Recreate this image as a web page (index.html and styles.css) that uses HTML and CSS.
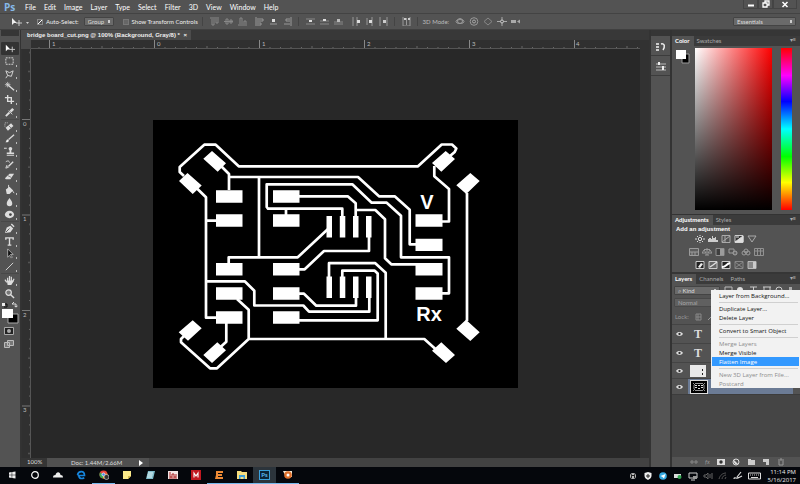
FILE: index.html
```html
<!DOCTYPE html>
<html lang="en">
<head>
  <meta charset="UTF-8">
  <title>bridge board_cut.png</title>
  <link rel="stylesheet" href="styles.css">
</head>
<body>
  <header class="menubar">
    <span class="logo">Ps</span>
    <nav class="menus">
      <a href="#">File</a><a href="#">Edit</a><a href="#">Image</a><a href="#">Layer</a><a href="#">Type</a><a href="#">Select</a><a href="#">Filter</a><a href="#">3D</a><a href="#">View</a><a href="#">Window</a><a href="#">Help</a>
    </nav>
    <div class="window-buttons">
      <button aria-label="Minimize"><svg width="8" height="8"><path d="M1 5.5h6" stroke="#fff" stroke-width="2"/></svg></button>
      <button aria-label="Restore"><svg width="8" height="8"><path d="M3 3V1h4v4H5M1 3h4v4H1z" fill="none" stroke="#fff" stroke-width="1.3"/></svg></button>
      <button class="close" aria-label="Close"><svg width="8" height="8"><path d="M1.500 2l5 5M6.500 2l-5 5" stroke="#fff" stroke-width="1.5"/></svg></button>
    </div>
  </header>

  <div class="options">
    <svg class="opt-move" width="20" height="12"><path d="M2 2v7l2-2h3z" fill="#eee"/><path d="M9 4v6M6 7h6" stroke="#ccc"/><path d="M16 6h3l-1.500 2z" fill="#ccc"/></svg>
    <label class="check"><input type="checkbox" checked>Auto-Select:</label>
    <select class="drop group-select" aria-label="Auto-select target"><option>Group</option></select>
    <label class="check transform"><input type="checkbox">Show Transform Controls</label>
    <div class="opt-group">
      <svg width="9" height="9"><path d="M0 1h9M2 2v6h2V2M6 2v4h2V2" fill="none" stroke="#888"/></svg>
      <svg width="9" height="9"><path d="M0 4.500h9M2 2v5h2V2zM6 3v3h2V3z" fill="none" stroke="#888"/></svg>
      <svg width="9" height="9"><path d="M0 8h9M2 7V1h2v6M6 7V4h2v3" fill="none" stroke="#888"/></svg>
    </div>
    <div class="opt-group">
      <svg width="9" height="9"><path d="M1 0v9M2 2h6v2H2M2 6h4v2H2" fill="none" stroke="#999"/></svg>
      <svg width="9" height="9"><path d="M1 7h7" stroke="#999"/><path d="M3 2h3v3H3z" fill="#ddd"/></svg>
      <svg width="9" height="9"><path d="M8 0v9M7 2H3v2h4M7 7H1" fill="none" stroke="#999"/></svg>
    </div>
    <div class="opt-group ruled">
      <svg width="9" height="9"><path d="M0 2h9M0 7h9" stroke="#888"/><path d="M3 3h3v2H3z" fill="#ddd"/></svg>
      <svg width="9" height="9"><path d="M0 4h9M0 7h9" stroke="#888"/><path d="M3 2h3v2H3z" fill="#ddd"/></svg>
      <svg width="9" height="9"><path d="M0 5h9M0 7h9" stroke="#888"/><path d="M3 2h3v3H3z" fill="#bbb"/></svg>
    </div>
    <div class="opt-group">
      <svg width="9" height="9"><path d="M2 0v9M6 0v9" stroke="#999"/><path d="M6 3h3v3H6z" fill="#ddd"/></svg>
      <svg width="9" height="9"><path d="M2 1v7M7 0v9" stroke="#999"/><path d="M4 3h3v3H4z" fill="#ddd"/></svg>
      <svg width="9" height="9"><path d="M1 0v9M8 0v9" stroke="#999"/><path d="M4 3h3v3H4z" fill="#ccc"/></svg>
    </div>
    <div class="opt-group ruled single">
      <svg width="9" height="9"><path d="M1 0v9h7V0M4.500 1v7" fill="none" stroke="#999"/><path d="M2 1h2v2H2zM6 1h2v2H6z" fill="#ccc"/></svg>
    </div>
    <div class="opt-group ruled mode">
      <span>3D Mode:</span>
      <svg width="10" height="9"><ellipse cx="5" cy="4.500" rx="4" ry="2" fill="none" stroke="#999"/><circle cx="5" cy="4" r="2.500" fill="none" stroke="#999"/></svg>
      <svg width="10" height="9"><circle cx="5" cy="4.500" r="3.800" fill="none" stroke="#999"/><circle cx="5" cy="4.500" r="1.500" fill="none" stroke="#aaa"/></svg>
      <svg width="10" height="9"><path d="M5 1l4 3.500L5 8 1 4.500z" fill="none" stroke="#888"/></svg>
      <svg width="10" height="9"><path d="M5 0v9M0 4.500h10" stroke="#aaa"/><circle cx="5" cy="4.500" r="1.500" fill="#555" stroke="#ccc"/></svg>
      <svg width="10" height="9"><path d="M0 3h5v3H0zM6 4.500l3-2v4z" fill="#aaa"/></svg>
    </div>
    <select class="drop workspace-select" aria-label="Workspace"><option>Essentials</option></select>
  </div>

  <main class="workspace">
    <aside class="toolbar">
      <div class="dock-head"></div>
      <div class="tools tools-a">
        <button class="active" aria-label="Move"><svg viewBox="0 0 12 12"><path d="M2 2v7l2-2h3z" fill="#fff"/><path d="M9 4v6M6 7h6" stroke="#ccc"/></svg></button>
        <button aria-label="Marquee"><svg viewBox="0 0 12 12"><path d="M2 2h8v7H2z" fill="none" stroke="#ddd" stroke-dasharray="2 1"/></svg></button>
        <button aria-label="Lasso"><svg viewBox="0 0 12 12"><path d="M2 2l4 2 4-2-2 6-4-1zM4 7l-2 3" fill="none" stroke="#ddd"/></svg></button>
        <button aria-label="Magic wand"><svg viewBox="0 0 12 12"><path d="M5 5l6 5" stroke="#ddd" stroke-width="1.500"/><path d="M4 1v6M1 4h6M2 2l4 4M6 2L2 6" stroke="#ddd" stroke-width=".8"/></svg></button>
        <button aria-label="Crop"><svg viewBox="0 0 12 12"><path d="M4 1v7h7M1 4h7v7" fill="none" stroke="#ddd" stroke-width="1.500"/></svg></button>
        <button aria-label="Eyedropper"><svg viewBox="0 0 12 12"><path d="M2 10l4-4" stroke="#ddd" stroke-width="2"/><path d="M6 4l3-3 2 2-3 3z" fill="#ddd"/><path d="M5 4l4 4" stroke="#ddd"/></svg></button>
      </div>
      <div class="tools tools-b">
        <button aria-label="Healing brush"><svg viewBox="0 0 12 12"><path d="M3 9l6-5" stroke="#ddd" stroke-width="4"/><path d="M1 6V2h4" fill="none" stroke="#ccc" stroke-dasharray="1 1"/><path d="M5 5l3 3" stroke="#777"/></svg></button>
        <button aria-label="Brush"><svg viewBox="0 0 12 12"><path d="M11 2L5 7" stroke="#ddd" stroke-width="1.500"/><path d="M1 10c2 0 1-3 3-3s2 4-3 3z" fill="#eee"/></svg></button>
        <button aria-label="Clone stamp"><svg viewBox="0 0 12 12"><circle cx="7" cy="3" r="2" fill="#ddd"/><path d="M6 4h2v3h3v2H3V7h3zM3 10h8v1H3zM0 2h3v1H0z" fill="#ddd"/></svg></button>
        <button aria-label="History brush"><svg viewBox="0 0 12 12"><path d="M10 3L5 8" stroke="#ddd" stroke-width="1.500"/><path d="M2 10l1-3 2 2zM2 3c3-2 4 0 4 1" fill="none" stroke="#ddd"/></svg></button>
        <button aria-label="Eraser"><svg viewBox="0 0 12 12"><path d="M1 8l5-5h5L7 9H2z" fill="#ddd"/><path d="M4 5l4 2" stroke="#777"/></svg></button>
        <button aria-label="Paint bucket"><svg viewBox="0 0 12 12"><path d="M2 6l4-3 4 4-4 4H3z" fill="#ddd"/><path d="M5 5V1M9 7l2 3" stroke="#ddd"/></svg></button>
        <button aria-label="Blur"><svg viewBox="0 0 12 12"><path d="M6 1c2 3 3 4 3 6a3 3 0 0 1-6 0c0-2 1-3 3-6z" fill="#ddd"/></svg></button>
        <button aria-label="Dodge"><svg viewBox="0 0 12 12"><ellipse cx="6" cy="6" rx="5" ry="4" fill="#ddd"/><circle cx="7" cy="6" r="1.500" fill="#444"/></svg></button>
      </div>
      <div class="tools tools-c">
        <button aria-label="Pen"><svg viewBox="0 0 12 12"><path d="M1 11l2-6 4-2 3 3-3 4z" fill="#ddd"/><path d="M8 1l3 3" stroke="#ddd" stroke-width="1.500"/><path d="M2 10l4-4" stroke="#555"/></svg></button>
        <button aria-label="Type"><svg viewBox="0 0 12 12"><path d="M2 4V2h8v2M6 2v8M4 10h4" fill="none" stroke="#ddd" stroke-width="1.500"/></svg></button>
        <button aria-label="Path selection"><svg viewBox="0 0 12 12"><path d="M4 1v9l2-2 2 3 1-1-2-3h3z" fill="#111" stroke="#ddd" stroke-width=".7"/></svg></button>
        <button aria-label="Line"><svg viewBox="0 0 12 12"><path d="M2 10l8-8" stroke="#ddd"/></svg></button>
      </div>
      <div class="tools tools-d">
        <button aria-label="Hand"><svg viewBox="0 0 12 12"><path d="M3 6l1 5h4l3-5" fill="#ddd"/><path d="M4 7V3M6 7V1M8 7V2M3 8L1 5M9 8l2-4" stroke="#ddd" stroke-width="1.300"/></svg></button>
        <button class="plain" aria-label="Zoom"><svg viewBox="0 0 12 12"><circle cx="5" cy="5" r="3" fill="#777" stroke="#ddd" stroke-width="1.300"/><path d="M7 7l4 4" stroke="#ddd" stroke-width="1.500"/></svg></button>
      </div>
      <svg class="swatches" width="18" height="24"><path d="M0 3h3v3H0z" fill="#eee"/><path d="M3 4h2v3H2" fill="none" stroke="#111"/><path d="M10 4h4v3M10 4l2-2M14 7l-1.500-1M14 7l1.500-1" fill="none" stroke="#ddd"/><path d="M6 14h10v9H6z" fill="#000" stroke="#aaa"/><path d="M0 9h11v9H0z" fill="#fff"/></svg>
      <button class="tool-wide" aria-label="Quick mask"><svg width="10" height="8"><path d="M.500.500h9v7h-9z" fill="#222" stroke="#aaa"/><circle cx="5" cy="4" r="2" fill="#aaa"/></svg></button>
      <button class="tool-wide" aria-label="Screen mode"><svg width="10" height="8"><path d="M3.500.500h6v5h-6zM.500 2.500h5v5h-5z" fill="#777" stroke="#bbb"/></svg></button>
    </aside>

    <section class="document">
      <div class="doc-tabs"><button class="doc-tab">bridge board_cut.png @ 100% (Background, Gray/8) *<span>×</span></button></div>
      <div class="doc-body">
        <div class="corner"></div>
        <svg class="ruler-h" height="9" width="100%">
          <defs>
            <pattern id="th" x="18" y="0" width="105" height="9" patternUnits="userSpaceOnUse">
              <path d="M.5 0v9" stroke="#888"/>
              <path d="M11 7v2M21.500 7v2M32 7v2M42.500 7v2M53 6v3M63.500 7v2M74 7v2M84.500 7v2M95 7v2" stroke="#686868"/>
            </pattern>
          </defs>
          <rect width="100%" height="9" fill="url(#th)"/>
          <path d="M0 8.500h610" stroke="#555"/>
          <g class="ruler-text"><text x="21" y="6">1</text><text x="126" y="6">0</text><text x="231" y="6">1</text><text x="336" y="6">2</text><text x="441" y="6">3</text><text x="545" y="6">4</text></g>
        </svg>
        <svg class="ruler-v" width="9" height="100%">
          <defs>
            <pattern id="tv" x="0" y="70" width="9" height="95.500" patternUnits="userSpaceOnUse">
              <path d="M0 .5h9" stroke="#777"/>
              <path d="M7 10h2M7 19.500h2M7 29h2M7 38.500h2M6 48h3M7 57.500h2M7 67h2M7 76.500h2M7 86h2" stroke="#686868"/>
            </pattern>
          </defs>
          <rect width="9" height="100%" fill="url(#tv)"/>
          <path d="M8.500 0v410" stroke="#555"/>
          <g class="ruler-text"><text x="1" y="77">0</text><text x="1" y="172">1</text><text x="1" y="268">2</text><text x="1" y="363">3</text></g>
        </svg>
        <div class="canvas">
          <svg class="board" width="365" height="268" viewBox="153 120 365 268">
            <rect x="153" y="120" width="365" height="268" fill="#000"/>
            <!-- traces -->
            <g fill="none" stroke="#fff" stroke-width="2.700" stroke-linejoin="round">
              <path d="M184 176L179.700 172V167L204.300 144.700H215.700L238.700 166.300H418L441.700 144.500H452L456.300 148.500L454.700 152L450 156"/>
              <path d="M221 166L229 174V190M229 177H358L379 196.300H394.700L409.700 209.700V244.300H416M259 177V257"/>
              <path d="M197 188.500L206 197.300V317.700H216M206 220.700H216"/>
              <path d="M286 215V208.700M342.300 217V208.700H268L266.700 207V184.300H352.300L371.700 202.700H386.700L401 215.700V257.300H449V293.300H442"/>
              <path d="M299 196.300H347.700L355.700 203.300V217M355.700 210H375.300L385 219.300V258.300L391.300 264.300H416"/>
              <path d="M442 221.500H449V189L434.300 176.300V166M467 193V321"/>
              <path d="M328 229L297.700 257.300H228.700V264M369 237V251H324L304.700 269.300H299"/>
              <path d="M206 281.300H244.700L254.300 290.700V305.500H303.300L309 311.700H369.300V297"/>
              <path d="M299 293.700H304L316.300 305.700H356V297M299 320.300H377.700V273.500L374.700 270.700H342.300V277"/>
              <path d="M329 277V263.200H375.300L385.700 272.700V339"/>
              <path d="M237 299L248.700 309.700V339L217 368.300H210L181 342.300V339L184 336M248.700 339H424.300L436 349.500M226.300 323V341.700L220 347.500"/>
            </g>
            <!-- pads -->
            <g fill="#fff">
              <path d="M216 190.300h26.500v12.400H216zM216 214.300h26.500v12.400H216zM216 263h26.500v12.400H216zM216 287.300h26.500v12.400H216zM216 311.300h26.500v12.400H216z"/>
              <path d="M273 190.300h26.500v12.400H273zM273 214.300h26.500v12.400H273zM273 263h26.500v12.400H273zM273 287.300h26.500v12.400H273zM273 311.300h26.500v12.400H273z"/>
              <path d="M415.500 214.300h27v12.400h-27zM415.500 238.700h27v12.400h-27zM415.500 263h27v12.400h-27zM415.500 287.300h27v12.400h-27z"/>
              <path d="M326.500 216h5.500v21.500h-5.500zM339.800 216h5.500v21.500h-5.500zM353 216h5.500v21.500H353zM366 216h5.500v21.500H366z"/>
              <path d="M326.500 276.500h5.500V298h-5.500zM339.800 276.500h5.500V298h-5.500zM353 276.500h5.500V298H353zM366 276.500h5.500V298H366z"/>
              <path d="M212 151L226 163.300L217.700 171.700L203.300 158.700zM187.500 173L201.700 185.500L192.700 194L179 181z"/>
              <path d="M445.700 151L455 159L441.300 171.700L432 163zM470.300 173L479.700 181L466.300 194L456.300 185.300z"/>
              <path d="M192.700 320.300L201.700 328.300L188 340.700L178.700 332.300zM217.300 342.300L226 350.300L212 363L203.300 355z"/>
              <path d="M466 319.700L479.700 332.300L470.300 341L456.300 328.700zM441.300 342.300L455 355L446 363L432 350.700z"/>
            </g>
            <g class="board-text"><text x="427" y="209">V</text><text x="429" y="321">Rx</text></g>
          </svg>
        </div>
      </div>
      <footer class="status">
        <span class="zoom-level">100%</span>
        <span class="doc-size">Doc: 1.44M/2.66M<svg width="4" height="6"><path d="M0 0l4 3-4 3z" fill="#fff"/></svg></span>
      </footer>
    </section>

    <aside class="icon-dock">
      <div class="dock-head"></div>
      <button aria-label="History"><svg width="10" height="10"><path d="M0 1h3v2H0zM0 4h3v2H0zM0 7h3v2H0z" fill="#ccc"/><path d="M5 2c4-1 4 3 2 6" fill="none" stroke="#eee" stroke-width="1.500"/></svg></button>
      <button aria-label="Properties"><svg width="10" height="10"><path d="M0 2h10M0 5h10M0 8h10" stroke="#bbb"/><path d="M2 0h2v3H2zM6 4h2v4H6z" fill="#eee"/></svg></button>
    </aside>

    <aside class="panels">
      <div class="dock-head"></div>
      <section class="panel">
        <div class="tabs"><button class="on">Color</button><button>Swatches</button><i class="panel-menu">▾≡</i></div>
        <div class="color-body">
          <svg width="16" height="16"><path d="M7 6h7v9H7z" fill="#000" stroke="#999"/><path d="M1 2h10v9H1z" fill="#fff"/></svg>
          <div class="field"></div>
          <div class="hue"></div>
        </div>
      </section>

      <section class="panel">
        <div class="tabs"><button class="on">Adjustments</button><button>Styles</button><i class="panel-menu">▾≡</i></div>
        <div class="adjust-body">
          <h2>Add an adjustment</h2>
          <div class="adjust-row">
            <svg viewBox="0 0 10 8"><circle cx="5" cy="4" r="1.700" fill="none" stroke="#ddd"/><path d="M5 0v1M5 7v1M0 4h2M8 4h2M2 1l1 1M8 1L7 2M2 7l1-1M8 7L7 6" stroke="#ddd"/></svg>
            <svg viewBox="0 0 10 8"><path d="M0 7V4h1V3h2v1h1V1h1v2h2V2h1v3h2v2z" fill="#ccc"/></svg>
            <svg viewBox="0 0 10 8"><path d="M1 .500h8v7H1zM1 7L9 1M4 1v6" fill="none" stroke="#aaa"/></svg>
            <svg viewBox="0 0 10 8"><path d="M1 .500h8v7H1z" fill="#333" stroke="#ccc"/><path d="M1 7l8-6v6zM2 2h3" fill="#ddd" stroke="#ddd"/></svg>
            <svg viewBox="0 0 10 8"><path d="M1 1h8L5 7z" fill="none" stroke="#aaa"/></svg>
          </div>
          <div class="adjust-row dim">
            <svg viewBox="0 0 10 8"><path d="M.500.500h9v7h-9zM0 4h9M3 4v3M6 4v3" fill="#666" stroke="#ccc"/></svg>
            <svg viewBox="0 0 10 8"><path d="M5 0v7M2 1.500h6M0 5l2-3 2 3zM6 5l2-3 2 3zM3 7h4" fill="none" stroke="#ccc"/></svg>
            <svg viewBox="0 0 10 8"><path d="M1 .500h8v7H1z" fill="#333" stroke="#bbb"/><path d="M5 1h4v6H5z" fill="#ccc"/></svg>
            <svg viewBox="0 0 10 8"><path d="M1 1h5v4H1z" fill="none" stroke="#ccc"/><circle cx="7" cy="5" r="2" fill="#777" stroke="#ddd"/></svg>
            <svg viewBox="0 0 10 8"><circle cx="5" cy="3" r="2" fill="none" stroke="#ccc"/><circle cx="3" cy="5" r="2" fill="none" stroke="#ccc"/><circle cx="7" cy="5" r="2" fill="none" stroke="#ccc"/></svg>
            <svg viewBox="0 0 10 8"><path d="M.500.500h9v7h-9zM0 3h10M3.500 0v8M6.500 0v8" fill="none" stroke="#bbb"/></svg>
          </div>
          <div class="adjust-row">
            <svg viewBox="0 0 10 8"><path d="M1 .500h8v7H1z" fill="#222" stroke="#ccc"/><path d="M3 6l3-4 2 1-3 4z" fill="#eee"/></svg>
            <svg viewBox="0 0 10 8"><path d="M1 .500h8v7H1z" fill="#666" stroke="#ccc"/><path d="M2 6l3-2 4-3" stroke="#ddd" stroke-width="1.500" fill="none"/></svg>
            <svg viewBox="0 0 10 8"><path d="M1 .500h8v7H1z" fill="#222" stroke="#ccc"/><path d="M1 6c4 0 4-3 8-4" stroke="#fff" stroke-width="2" fill="none"/></svg>
            <svg viewBox="0 0 10 8"><path d="M1 .500h8v7H1zM1 1l4 3 4-3M1 7l4-3 4 3" fill="none" stroke="#888"/></svg>
            <svg viewBox="0 0 10 8"><path d="M1 .500h8v7H1z" fill="#888" stroke="#bbb"/><path d="M6 1h3v6H6z" fill="#ccc"/></svg>
          </div>
        </div>
      </section>

      <section class="panel layers">
        <div class="tabs"><button class="on">Layers</button><button>Channels</button><button>Paths</button><i class="panel-menu">▾≡</i></div>
        <div class="filter-row">
          <select class="drop" aria-label="Filter"><option>⌕ Kind</option></select>
          <svg width="72" height="10"><path d="M5 2h7v6H5z" fill="none" stroke="#bbb"/><circle cx="20" cy="5" r="3" fill="#ddd"/><path d="M30 2h7M33.500 2v6M44 2v6M50 2v6M43 2h8" stroke="#ccc"/><circle cx="59" cy="5" r="3" fill="none" stroke="#ccc"/><path d="M69 2h3v5h-3z" fill="#aaa"/></svg>
        </div>
        <div class="blend-row"><select class="drop" aria-label="Blend mode" disabled><option>Normal</option></select></div>
        <div class="lock-row"><span>Lock:</span><svg width="22" height="8"><path d="M1 1h5v6H1zM3 1v6M1 4h5" fill="none" stroke="#888"/><path d="M13 7l6-6" stroke="#999"/></svg></div>
        <div class="layer tall"><svg class="eye" viewBox="0 0 8 6"><path d="M0 3c2-3 6-3 8 0-2 3-6 3-8 0z" fill="#ddd"/><circle cx="4" cy="3" r="1.300" fill="#333"/></svg><span class="type-thumb">T</span></div>
        <div class="layer tall"><svg class="eye" viewBox="0 0 8 6"><path d="M0 3c2-3 6-3 8 0-2 3-6 3-8 0z" fill="#ddd"/><circle cx="4" cy="3" r="1.300" fill="#333"/></svg><span class="type-thumb">T</span></div>
        <div class="layer"><svg class="eye" viewBox="0 0 8 6"><path d="M0 3c2-3 6-3 8 0-2 3-6 3-8 0z" fill="#ddd"/><circle cx="4" cy="3" r="1.300" fill="#333"/></svg><svg class="thumb" width="16" height="12"><rect width="16" height="12" fill="#e8e8e8"/><path d="M12 4h1v2h-1zM12 8h1v2h-1z" fill="#222"/></svg></div>
        <div class="layer selected"><svg class="eye" viewBox="0 0 8 6"><path d="M0 3c2-3 6-3 8 0-2 3-6 3-8 0z" fill="#ddd"/><circle cx="4" cy="3" r="1.300" fill="#333"/></svg><svg class="thumb" width="18" height="14"><rect x=".5" y=".5" width="17" height="13" fill="#000" stroke="#ddd"/><path d="M3 3l2 2M15 3l-2 2M3 11l2-2M15 11l-2-2M5 3.500h8M4 5v4M5 10.500h8M14 5v4" stroke="#bbb" stroke-width=".8" fill="none"/><path d="M5 5h2v1H5zM5 7h2v1H5zM8 5h2v1H8zM8 8h2v1H8zM11 5h2v1h-2zM11 7h2v1h-2z" fill="#ddd"/></svg></div>
        <div class="layers-empty"></div>
        <div class="layers-foot">
          <svg viewBox="0 0 8 8"><path d="M3 3H1v2h2M5 3h2v2H5M2 4h4" fill="none" stroke="#888"/></svg>
          <span>fx</span>
          <svg viewBox="0 0 8 8"><path d="M0 1h8v6H0z" fill="#ddd"/><circle cx="4" cy="4" r="1.700" fill="#333"/></svg>
          <svg viewBox="0 0 8 8"><circle cx="4" cy="4" r="3" fill="none" stroke="#ddd"/><path d="M2 2l4 4a3 3 0 0 1-4-4z" fill="#ddd"/></svg>
          <svg viewBox="0 0 8 8"><path d="M1 1h3v1h4v5H1z" fill="#ccc"/></svg>
          <svg viewBox="0 0 8 8"><path d="M1 1h6v6H4V4H1z" fill="#ccc"/></svg>
          <svg viewBox="0 0 8 8"><path d="M1 2h6M3 1h2M2 3v4h4V3" fill="none" stroke="#999"/></svg>
        </div>
        <div class="context-menu" role="menu">
          <button>Layer from Background...</button>
          <hr>
          <button>Duplicate Layer...</button>
          <button>Delete Layer</button>
          <hr>
          <button>Convert to Smart Object</button>
          <hr>
          <button disabled>Merge Layers</button>
          <button>Merge Visible</button>
          <button class="hot">Flatten Image</button>
          <hr>
          <button disabled>New 3D Layer from File...</button>
          <button disabled>Postcard</button>
        </div>
      </section>
    </aside>
  </main>

  <footer class="taskbar">
    <button aria-label="Start"><svg viewBox="0 0 10 10"><path d="M2 2.500l2.700-.5v2.700H2zM5.200 2L8.500 1.500v3.200H5.200zM2 5.200h2.700V8L2 7.500zM5.200 5.200h3.300v3.300L5.200 8z" fill="#eee"/></svg></button>
    <button aria-label="Search"><svg viewBox="0 0 10 10"><circle cx="5" cy="5" r="3.300" fill="none" stroke="#fff" stroke-width="1.200"/></svg></button>
    <button aria-label="OneDrive"><svg viewBox="0 0 12 10"><path d="M0 8c0-2 1-3 3-3 1-5 6-4 6 0 2 0 3 1 3 3z" fill="#eee"/></svg></button>
    <button aria-label="Edge"><svg viewBox="0 0 10 10"><path d="M1.500 5.500h7C8.500.500 2.500.500 1.500 5M3 5c-.5 4 3 4 5.300 2.700" fill="none" stroke="#1684dc" stroke-width="1.700"/></svg></button>
    <button class="open" aria-label="Chrome"><svg viewBox="0 0 10 10"><circle cx="4.500" cy="4.500" r="4" fill="#e8453c"/><path d="M4.500 4.500L1 2.500a4 4 0 0 0 3 6z" fill="#3aa757"/><path d="M4.500 4.500l-.5 4a4 4 0 0 0 4.300-5z" fill="#f5c518"/><circle cx="4.500" cy="4.500" r="1.600" fill="#4285f4" stroke="#fff" stroke-width=".7"/><circle cx="7.500" cy="7" r="2.500" fill="#333" stroke="#ccc" stroke-width=".7"/></svg></button>
    <button aria-label="Notes"><svg viewBox="0 0 10 10"><path d="M1 1h8v5L6 9H1z" fill="#fbe98a"/><path d="M9 6H6v3z" fill="#d3b74b"/></svg></button>
    <button aria-label="Notepad"><svg viewBox="0 0 10 10"><path d="M3 1h7L8 9H1z" fill="#7fbccb"/><path d="M3 3h5M2.500 5h5M2 7h5" stroke="#e8f5f8"/></svg></button>
    <button aria-label="Utility"><svg viewBox="0 0 10 10"><path d="M0 1h10v8H0z" fill="#f2e6e6"/><path d="M2 2v5h2V4h2v3h2V4M1 8h8" fill="none" stroke="#a22"/></svg></button>
    <button aria-label="Mendeley"><svg viewBox="0 0 10 10"><path d="M0 0h10v10H0z" fill="#c01820"/><path d="M3 7.500V3l2 3 2-3v4.500" fill="none" stroke="#fff" stroke-width="1.100"/></svg></button>
    <button class="open" aria-label="Eagle"><svg viewBox="0 0 10 10"><path d="M2 1h7v2H4v1h4v2H4v1h5v2H1l1-4z" fill="#ee8a35"/></svg></button>
    <button class="open" aria-label="Explorer"><svg viewBox="0 0 10 10"><path d="M0 1h4l1 1h5v7H0z" fill="#f6dd7e"/><path d="M2 5h6v4H6.500V7h-3v2H2z" fill="#3f9fd8"/></svg></button>
    <button class="open current" aria-label="Photoshop"><span class="ps-icon">Ps</span></button>
    <button class="open" aria-label="Capture"><svg viewBox="0 0 10 10"><path d="M0 1h9v6H3z" fill="#f3e9d6"/><circle cx="5" cy="5" r="3.800" fill="#e0702a"/><circle cx="5" cy="5" r="1.500" fill="#fff"/></svg></button>
    <div class="tray">
      <svg viewBox="0 0 10 10"><circle cx="5" cy="5" r="3" fill="#bbb"/><path d="M3.500 7V3.500L5 5l1.500-1.500V7" fill="none" stroke="#222"/></svg>
      <svg viewBox="0 0 10 10"><path d="M5 1l3.500 1v3c0 2-2 3-3.500 4-1.500-1-3.500-2-3.500-4V2z" fill="#eee"/><path d="M5 3v4M3 5h4" stroke="#222"/></svg>
      <svg viewBox="0 0 10 10"><circle cx="5" cy="5" r="3.800" fill="#35a9e1"/><path d="M2.500 5l5-2-1.500 4.500-1.500-1.500z" fill="#fff"/></svg>
      <svg viewBox="0 0 10 10"><path d="M1 3h7v4H1z" fill="#ddd"/><circle cx="6.500" cy="6" r="2" fill="#32a852"/></svg>
      <svg viewBox="0 0 10 10"><path d="M1 2h8v5H1zM3 9h4" fill="none" stroke="#ccc"/><path d="M5 5h4v3H5z" fill="#999"/></svg>
      <svg viewBox="0 0 10 10"><path d="M1 4h2l2-2v6L3 6H1zM7 3v4M9 2v6" fill="none" stroke="#666"/></svg>
      <svg viewBox="0 0 10 10"><path d="M1 8c1-4 4-6 7-6M4 8c0-2 2-4 4-4M7 8l1-2" fill="none" stroke="#555"/></svg>
      <svg viewBox="0 0 10 10"><path d="M1 8c0-3 4 1 4-2M4 6l4-5M5 7l4-2" fill="none" stroke="#ddd" stroke-width="1.200"/></svg>
      <svg class="keyboard" viewBox="0 0 13 10"><path d="M.5 2h12v6H.5zM3 6.500h7" fill="none" stroke="#ddd"/><path d="M2 4h9" stroke="#ccc" stroke-dasharray="1 1"/></svg>
      <time class="clock">11:14 PM<br>5/16/2017</time>
    </div>
  </footer>
</body>
</html>
```

FILE: styles.css
```css
* {
  box-sizing: border-box;
}

body {
  margin: 0;
  height: 100vh;
  display: flex;
  flex-direction: column;
  overflow: hidden;
  background-color: #282828;
  color: #ddd;
  font-family: Lato, "Liberation Sans", sans-serif;
  font-size: 6px;
  line-height: 8px;
}

button, select, input {
  font: inherit;
  color: inherit;
  margin: 0;
}

button {
  border: none;
  background: none;
  padding: 0;
}

svg {
  display: block;
  flex: none;
}

/* Menu bar */
.menubar {
  display: flex;
  align-items: center;
  height: 14px;
  background-color: #535353;
  border-bottom: 1px solid #434343;
}

.logo {
  width: 25px;
  padding-left: 4px;
  color: #86b8e8;
  font-family: "Open Sans", sans-serif;
  font-size: 10px;
  font-weight: bold;
  line-height: 14px;
}

.menus {
  display: flex;
  gap: 8px;
  font-size: 7px;
}

.menus a {
  color: #fff;
  text-decoration: none;
}

.window-buttons {
  display: flex;
  align-self: flex-start;
  margin-left: auto;
  margin-right: 3px;
}

.window-buttons button {
  display: flex;
  justify-content: center;
  width: 15px;
  height: 9px;
  border: 1px solid #444;
  border-top: none;
}

.window-buttons .close {
  width: 24px;
}

/* Options bar */
.options {
  display: flex;
  align-items: center;
  height: 16px;
  padding: 0 4px 0 10px;
  background-color: #535353;
  border-bottom: 1px solid #404040;
}

.opt-move {
  margin-right: 7px;
}

.check {
  display: flex;
  align-items: center;
  gap: 3px;
  color: #eee;
}

.check input {
  appearance: none;
  flex: none;
  width: 6px;
  height: 6px;
  border: 1px solid #777;
  background-color: #666;
}

.check input:checked {
  border-color: #888;
  background: linear-gradient(135deg, #555 40%, #fff 40%, #fff 60%, #555 60%);
}

.drop {
  appearance: none;
  height: 9px;
  padding: 0 3px;
  border: 1px solid #444;
  border-radius: 1px;
  background: linear-gradient(90deg, transparent 0 2px, #ccc 2px 4px, transparent 4px) right center / 7px 3px no-repeat, #6a6a6a;
  line-height: 7px;
}

.group-select {
  width: 30px;
  margin: 0 9px 0 5px;
}

.transform {
  width: 73px;
  white-space: nowrap;
}

.opt-group {
  display: flex;
  align-items: center;
  gap: 5px;
  padding-left: 8px;
}

.opt-group.ruled,
.transform + .opt-group {
  margin-left: 6px;
  padding-left: 7px;
  border-left: 1px solid #444;
}

.opt-group.mode {
  gap: 4px;
  padding-left: 5px;
  color: #bbb;
}

.mode span {
  margin-right: 2px;
}

.workspace-select {
  width: 63px;
  margin-left: auto;
}

/* Workspace */
.workspace {
  flex: 1;
  display: flex;
  min-height: 0;
}

.dock-head {
  flex: none;
  height: 6px;
  background-color: #363636;
}

.toolbar {
  display: flex;
  flex-direction: column;
  width: 21px;
  padding: 0 1px;
  background-color: #535353;
  border-right: 1px solid #333;
}

.tools {
  display: grid;
  grid-auto-rows: 1fr;
  flex: none;
  border-bottom: 1px solid #484848;
}

.tools-a {
  height: 78px;
  margin-top: 6px;
}

.tools-b {
  height: 102px;
}

.tools-c {
  height: 52px;
}

.tools-d {
  height: 26px;
  border: none;
}

.tools button {
  display: flex;
  align-items: center;
  gap: 1px;
  padding-left: 3px;
}

.tools button::after {
  content: "";
  align-self: flex-end;
  width: 1px;
  height: 2px;
  margin-bottom: 1px;
  background-color: #bbb;
}

.tools .plain::after,
.tools .active::after {
  display: none;
}

.tools svg {
  width: 11px;
  height: 11px;
}

.tools .active {
  background-color: #333;
  border-radius: 1px;
}

.swatches {
  margin: 0 0 1px 1px;
}

.tool-wide {
  padding: 2px 0 3px 3px;
}

/* Document */
.document {
  flex: 1;
  display: flex;
  flex-direction: column;
  min-width: 0;
}

.doc-tabs {
  height: 10px;
  background-color: #383838;
}

.doc-tab {
  display: flex;
  justify-content: space-between;
  width: 170px;
  height: 10px;
  padding: 1px 4px 1px 6px;
  background-color: #4c4c4c;
  color: #eee;
  font-family: "Liberation Sans", sans-serif;
  font-weight: bold;
  white-space: nowrap;
}

.doc-body {
  flex: 1;
  display: grid;
  grid-template: 9px 1fr / 10px 1fr;
  min-height: 0;
  padding-right: 9px;
  background-color: #323232;
}

.corner {
  background-color: #4a4a4a;
}

.ruler-h,
.ruler-v {
  background-color: #303030;
}

.ruler-v {
  margin-left: 1px;
  min-height: 0;
}

.ruler-text {
  fill: #bbb;
  font-size: 6px;
}

.canvas {
  display: flex;
  align-items: center;
  justify-content: center;
  min-height: 0;
  background-color: #282828;
}

.board-text {
  fill: #fff;
  font-family: "Liberation Sans", sans-serif;
  font-size: 20px;
  font-weight: bold;
  text-anchor: middle;
}

.status {
  display: flex;
  height: 9px;
  background-color: #424242;
}

.zoom-level {
  width: 26px;
  padding-left: 6px;
  background-color: #353535;
}

.doc-size {
  display: flex;
  align-items: center;
  justify-content: space-between;
  width: 102px;
  padding: 0 6px 0 24px;
  background-color: #505050;
}

/* Docks */
.icon-dock {
  width: 23px;
  background-color: #535353;
  border-left: 2px solid #333;
  border-right: 2px solid #333;
}

.icon-dock button {
  display: flex;
  justify-content: center;
  width: 100%;
  padding: 6px 0 3px;
  border-bottom: 1px solid #3c3c3c;
}

.panels {
  display: flex;
  flex-direction: column;
  width: 128px;
  background-color: #535353;
}

.tabs {
  display: flex;
  height: 10px;
  background-color: #3b3b3b;
}

.tabs button {
  padding: 0 4px 0 3px;
  color: #aaa;
}

.tabs .on {
  background-color: #535353;
  color: #fff;
  font-weight: bold;
}

.panel-menu {
  margin: 0 4px 0 auto;
  color: #aaa;
  font-style: normal;
}

.color-body {
  display: flex;
  height: 169px;
  padding: 2px 8px 4px 3px;
  border-bottom: 1px solid #333;
}

.field {
  flex: 1;
  margin: 0 9px 0 4px;
  background: linear-gradient(to top, #000, transparent), linear-gradient(to right, #fff, #f00);
}

.hue {
  width: 11px;
  background: linear-gradient(#f00, #f0f 17%, #00f 33%, #0ff 50%, #0f0 67%, #ff0 83%, #f00);
}

.adjust-body {
  height: 49px;
  border-bottom: 2px solid #363636;
}

.adjust-body h2 {
  margin: 0;
  padding: 0 4px;
  color: #fff;
  font-family: "Liberation Sans", sans-serif;
  font-size: 6px;
}

.adjust-row {
  display: flex;
  justify-content: center;
  gap: 3px;
  height: 13px;
  padding: 2px 20px 0 0;
}

.adjust-row svg {
  width: 10px;
  height: 8px;
}

.dim {
  opacity: .6;
}

.layers {
  position: relative;
  flex: 1;
  display: flex;
  flex-direction: column;
  min-height: 0;
}

.filter-row {
  display: flex;
  align-items: center;
  height: 12px;
  padding-left: 2px;
}

.filter-row .drop,
.blend-row .drop {
  width: 46px;
}

.blend-row {
  height: 14px;
  padding: 2px;
}

.blend-row .drop {
  opacity: .6;
}

.lock-row {
  display: flex;
  align-items: center;
  gap: 6px;
  height: 14px;
  padding-left: 3px;
  color: #999;
}

.layer {
  display: flex;
  align-items: center;
  height: 16px;
  margin-right: 7px;
  border-top: 1px solid #444;
}

.layer.tall {
  height: 19px;
}

.layer.selected {
  background: linear-gradient(90deg, #535353 16px, #6b7b95 16px);
}

.eye {
  width: 7px;
  height: 6px;
  margin: 0 6px 0 4px;
}

.type-thumb {
  width: 18px;
  text-align: center;
  font-family: "Liberation Serif", serif;
  font-size: 12px;
  font-weight: bold;
  line-height: 14px;
}

.layer .thumb {
  margin-left: 1px;
}

.layers-empty {
  flex: 1;
  background-color: #454545;
  border-top: 1px solid #3c3c3c;
}

.layers-foot {
  display: flex;
  align-items: center;
  justify-content: space-between;
  height: 10px;
  padding: 0 15px 0 18px;
  color: #999;
  font-style: italic;
}

.layers-foot svg {
  width: 8px;
  height: 8px;
}

.context-menu {
  position: absolute;
  top: 16px;
  right: 0;
  width: 89px;
  padding: 1px 1px 0;
  background-color: #f2f2f2;
  color: #111;
  font-family: "Open Sans", sans-serif;
}

.context-menu button {
  display: block;
  width: 100%;
  height: 9px;
  padding-left: 7px;
  text-align: left;
  white-space: nowrap;
}

.context-menu button:disabled {
  color: #8c8c8c;
}

.context-menu .hot {
  background-color: #3399ff;
  color: #fff;
}

.context-menu hr {
  margin: 2px 1px 1px 7px;
  border: none;
  border-top: 1px solid #d0d0d0;
}

/* Taskbar */
.taskbar {
  display: flex;
  height: 17px;
  background-color: #05070c;
}

.taskbar button {
  display: flex;
  align-items: center;
  justify-content: center;
  width: 23px;
  border-bottom: 1px solid transparent;
}

.taskbar button svg {
  width: 10px;
  height: 10px;
}

.taskbar .open {
  border-bottom-color: #76b9ed;
}

.taskbar .current {
  background-color: #2c343b;
}

.ps-icon {
  padding: 0 1px;
  border: 1px solid #3aa0dc;
  background-color: #0b2438;
  color: #5dbcf5;
  font-weight: bold;
}

.tray {
  display: flex;
  align-items: center;
  gap: 5px;
  margin-left: auto;
  padding-right: 4px;
}

.tray svg {
  width: 10px;
  height: 10px;
}

.tray .keyboard {
  width: 13px;
}

.clock {
  width: 30px;
  color: #eee;
  font-family: "Open Sans", sans-serif;
  text-align: right;
}
```
